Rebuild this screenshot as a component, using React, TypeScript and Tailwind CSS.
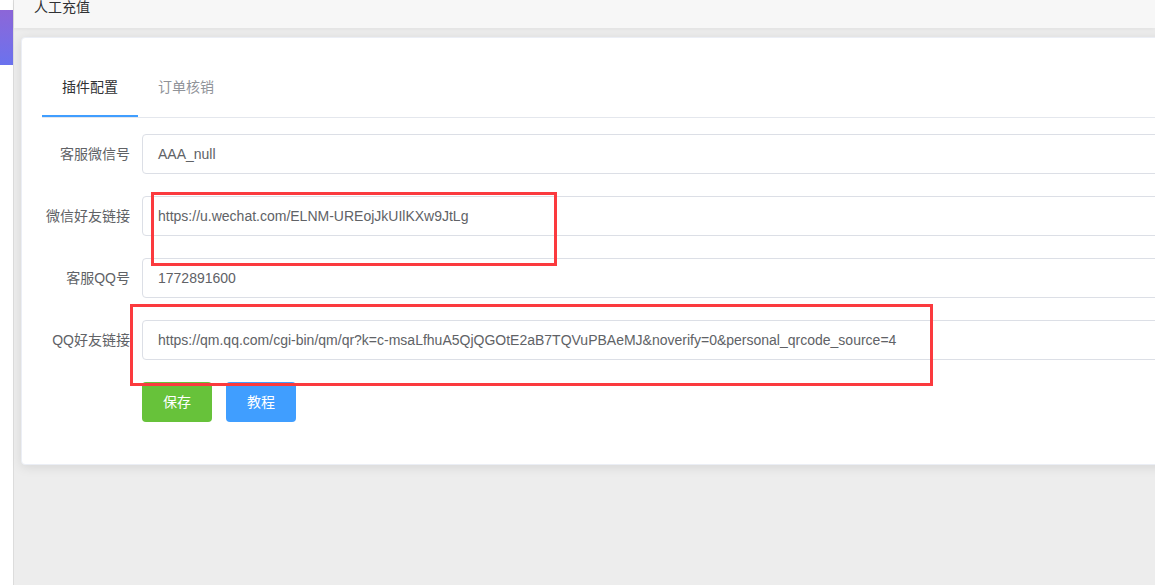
import React from "react";

const cjk = { fontFamily: '"Liberation Sans", "Noto Sans CJK SC", sans-serif' };

const rows = [
  { label: "客服微信号", value: "AAA_null" },
  { label: "微信好友链接", value: "https://u.wechat.com/ELNM-UREojJkUIlKXw9JtLg" },
  { label: "客服QQ号", value: "1772891600" },
  {
    label: "QQ好友链接",
    value:
      "https://qm.qq.com/cgi-bin/qm/qr?k=c-msaLfhuA5QjQGOtE2aB7TQVuPBAeMJ&noverify=0&personal_qrcode_source=4",
  },
];

export default function App() {
  return (
    <div
      className="relative flex w-[1155px] h-[585px] overflow-hidden bg-[#ededed]"
      style={cjk}
    >
      <div className="w-[14px] shrink-0 bg-white border-r border-[#dcdcdc] pt-[10px]">
        <div className="h-[55px] bg-gradient-to-b from-[#8c66d8] to-[#6a72ee]" />
      </div>
      <div className="flex flex-col min-w-0 flex-1">
        <div className="h-[28px] shrink-0 bg-[#f7f7f7] pl-[20px] text-[14px] leading-[15px] text-[#303133] shadow-[0_1px_4px_rgba(0,0,0,0.06)]">
          人工充值
        </div>
        <div className="mt-[9px] ml-[7px]">
          <div className="w-[1400px] bg-white border border-[#ebeef5] rounded-[4px] shadow-[0_2px_12px_0_rgba(0,0,0,0.1)] px-[20px] pt-[29px] pb-[20px]">
            <div className="flex border-b border-[#e4e7ed] h-[51px]">
              <div className="h-[50px] px-[20px] leading-[40px] text-[14px] text-[#303133] border-b-2 border-[#409eff]">
                插件配置
              </div>
              <div className="h-[50px] px-[20px] leading-[40px] text-[14px] text-[#909399]">
                订单核销
              </div>
            </div>
            <div className="mt-[16px] flex flex-col gap-[22px]">
              {rows.map((r) => (
                <div key={r.label} className="flex">
                  <div className="w-[100px] shrink-0 pr-[12px] text-right leading-[40px] text-[14px] text-[#606266]">
                    {r.label}
                  </div>
                  <div className="flex-1 h-[40px] border border-[#dcdfe6] rounded-[4px] px-[15px] leading-[38px] text-[14px] text-[#606266] whitespace-nowrap">
                    {r.value}
                  </div>
                </div>
              ))}
              <div className="flex pl-[100px] gap-[14px] mb-[22px]">
                <button className="w-[70px] h-[40px] rounded-[4px] bg-[#67c23a] text-white text-[14px]">
                  保存
                </button>
                <button className="w-[70px] h-[40px] rounded-[4px] bg-[#409eff] text-white text-[14px]">
                  教程
                </button>
              </div>
            </div>
          </div>
        </div>
      </div>
      <div className="absolute left-[151px] top-[192px] w-[406px] h-[74px] border-[3px] border-[#fb3a3e] pointer-events-none" />
      <div className="absolute left-[130px] top-[304px] w-[803px] h-[82px] border-[3px] border-[#fb3a3e] pointer-events-none" />
    </div>
  );
}
